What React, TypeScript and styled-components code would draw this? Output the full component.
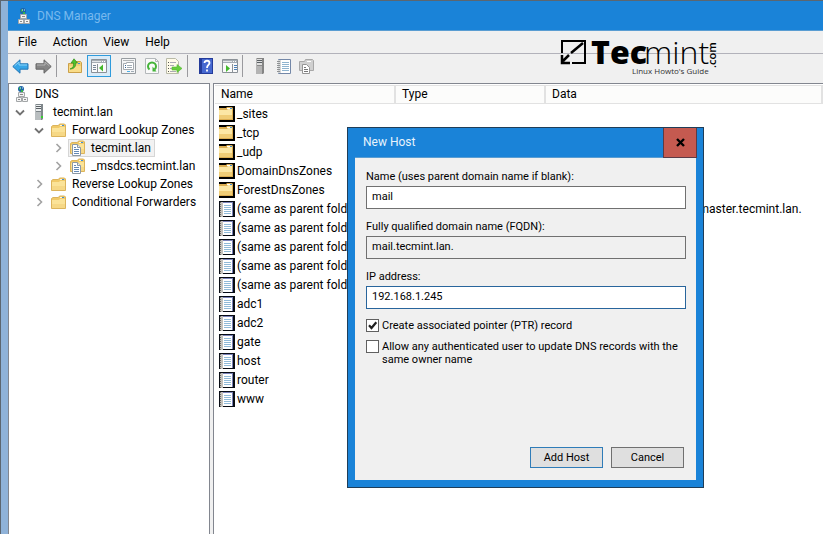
import React from "react";
import styled, { createGlobalStyle } from "styled-components";

const uiFont = `Roboto, "Open Sans", sans-serif`;

const GlobalStyle = createGlobalStyle`
  * { box-sizing: border-box; }
  body { margin: 0; background: #8fb2d8; font-family: ${uiFont}; font-size: 12px; color: #000; }
  button, input { font: inherit; color: inherit; }
  svg { display: block; flex: none; }
`;

/* ---------- window frame ---------- */

const Window = styled.div`
  position: relative;
  display: flex;
  flex-direction: column;
  min-height: 100vh;
  padding-left: 7px;
  border-top: 1px solid #5c6670;
  border-left: 1px solid #5c6670;
  background: #8fb2d8;
`;

const TitleBar = styled.header`
  display: flex;
  align-items: center;
  gap: 6px;
  height: 30px;
  padding-left: 10px;
  background: #1a83d8;
  border-bottom: 1px solid #5a9dd2;
`;

const AppTitle = styled.h1`
  margin: 0;
  font-size: 12px;
  font-weight: 400;
  color: #78b9ee;
`;

const MenuBar = styled.nav`
  display: flex;
  height: 23px;
  padding-left: 2px;
  background: #f0f0f0;
  border-bottom: 1px solid #b2b2ba;
`;

const MenuButton = styled.button`
  padding: 0 8px;
  border: 0;
  background: none;
  line-height: 20px;
`;

const Toolbar = styled.div`
  display: flex;
  align-items: center;
  height: 29px;
  padding: 0 1px 5px;
  background: #f0f0f0;
`;

const ToolGroup = styled.div<{ $gap?: boolean }>`
  display: flex;
  margin-left: ${(p) => (p.$gap ? "6px" : "0")};
`;

const ToolButton = styled.button<{ $wide?: boolean; $active?: boolean }>`
  display: flex;
  align-items: center;
  justify-content: center;
  width: ${(p) => (p.$wide ? "24px" : "23px")};
  height: 22px;
  padding: 0;
  border: 1px solid ${(p) => (p.$active ? "#2f9bdc" : "transparent")};
  background: ${(p) => (p.$active ? "#d9ebf8" : "none")};
`;

const Divider = styled.span`
  width: 1px;
  height: 22px;
  margin: 0 6px 0 1px;
  background: #9a9a9e;
`;

const Logo = styled.div`
  position: absolute;
  top: 24px;
  left: 557px;
`;

/* ---------- panes ---------- */

const Panes = styled.main`
  display: grid;
  grid-template-columns: 202px minmax(0, 1fr);
  gap: 3px;
  flex: 1;
  background: #f0f0f0;
`;

const Pane = styled.section`
  border: 1px solid #82868f;
  border-bottom: 0;
  background: #fff;
  overflow: hidden;
`;

const ListPane = styled(Pane)`
  border-right: 0;
  padding: 1px 0 0 1px;
`;

const Tree = styled.ul`
  margin: 0;
  padding: 1px 0 0;
  list-style: none;
`;

const TreeItem = styled.li<{ $depth: number }>`
  display: flex;
  align-items: center;
  height: 18px;
  padding-left: ${(p) => [5, 4, 23, 42][p.$depth]}px;
`;

const Chevron = styled.span`
  display: flex;
  justify-content: center;
  width: 14px;
  margin-right: 3px;
`;

const TreeLabel = styled.span<{ $selected?: boolean }>`
  display: flex;
  align-items: center;
  gap: 6px;
  height: 18px;
  padding: 0 3px 0 1px;
  border: 1px solid ${(p) => (p.$selected ? "#d6d6d6" : "transparent")};
  background: ${(p) => (p.$selected ? "#f2f2f2" : "none")};
  line-height: 16px;
  white-space: nowrap;
`;

const RecordTable = styled.table`
  width: 100%;
  border-collapse: separate;
  border-spacing: 0;
  table-layout: fixed;
`;

const HeadCell = styled.th<{ $width?: number }>`
  width: ${(p) => (p.$width ? `${p.$width}px` : "auto")};
  height: 19px;
  padding: 0 6px;
  border: solid #e2e2e2;
  border-width: 1px 2px 1px 0;
  background: #fcfcfb;
  font-weight: 400;
  line-height: 17px;
  text-align: left;
`;

const Cell = styled.td`
  height: 19px;
  padding: 0 6px;
  line-height: 18px;
  white-space: nowrap;
`;

const NameCell = styled(Cell)`
  padding: 0 0 0 4px;
`;

const NameContent = styled.span`
  display: flex;
  align-items: center;
  gap: 2px;
`;

/* ---------- dialog ---------- */

const Dialog = styled.form`
  position: absolute;
  top: 126px;
  left: 346px;
  width: 357px;
  border: 1px solid #1f3d58;
  background: #1a83d8;
  padding: 0 7px 7px;
  font-size: 11px;
`;

const DialogBar = styled.div`
  display: flex;
  justify-content: space-between;
  height: 29px;
  padding-left: 8px;
`;

const DialogTitle = styled.h2`
  margin: 0;
  font-size: 12px;
  font-weight: 400;
  line-height: 29px;
  color: #e8f3fc;
`;

const CloseButton = styled.button`
  display: flex;
  align-items: center;
  justify-content: center;
  width: 34px;
  height: 30px;
  margin-right: -1px;
  border: 1px solid #5b3b46;
  border-top: 0;
  background: #c55a50;
  z-index: 1;
`;

const DialogBody = styled.div`
  display: flex;
  flex-direction: column;
  min-height: 323px;
  padding: 11px 10px 12px 11px;
  border-top: 1px solid #5a9dd2;
  background: #f0f0f0;
`;

const Field = styled.div`
  display: flex;
  flex-direction: column;
  margin-bottom: 10px;
`;

const FieldLabel = styled.label`
  height: 17px;
  line-height: 15px;
`;

const TextBox = styled.input`
  width: 100%;
  height: 23px;
  padding: 0 5px 3px;
  border: 1px solid #707070;
  border-radius: 0;
  outline: 0;
  background: #fff;
  &:read-only { background: #f0f0f0; }
`;

const AddressBox = styled(TextBox)`
  border-color: #28659c;
`;

const CheckLabel = styled.label`
  display: flex;
  gap: 3px;
  margin-bottom: 8px;
  line-height: 13px;
`;

const CheckBox = styled.input`
  appearance: none;
  flex: none;
  width: 13px;
  height: 13px;
  margin: 0;
  border: 1px solid #606060;
  background: #fff;
  &:checked {
    background: #fff url("data:image/svg+xml,%3Csvg xmlns='http://www.w3.org/2000/svg' viewBox='0 0 11 11'%3E%3Cpath d='M2 5.2 4.5 8 9.3 2.2' fill='none' stroke='%23202020' stroke-width='2.2'/%3E%3C/svg%3E");
  }
`;

const Actions = styled.div`
  display: flex;
  justify-content: flex-end;
  gap: 8px;
  margin-top: auto;
  padding-right: 2px;
`;

const PushButton = styled.button<{ $primary?: boolean }>`
  width: 73px;
  height: 21px;
  padding: 0;
  border: 1px solid ${(p) => (p.$primary ? "#2f7cb8" : "#707070")};
  background: #dfdfdf;
`;

/* ---------- icons ---------- */

const DnsIcon = () => (
  <svg width="13" height="16" viewBox="0 0 13 16">
    <circle cx="5" cy="3" r="3" fill="#1d63a8" />
    <path d="M3 1.5h2v2H3zM5 4h2v2H5z" fill="#35b34a" />
    <path d="M4 2h1M6 2h1" stroke="#c8ecf8" />
    <path d="M2.5 6.5h6v4h-6z" fill="#f2f2f2" stroke="#a3a6a8" />
    <path d="M4 8.5h3" stroke="#8a8a8a" />
    <path d="M.5 11.5h5v4h-5zM6.5 11.5h5v4h-5z" fill="#f4f4f4" stroke="#a3a6a8" />
    <path d="M2 13.5h2M8 13.5h2" stroke="#8a8a8a" />
  </svg>
);

const ServerIcon = ({ gray }: { gray?: boolean }) => (
  <svg width="15" height="16" viewBox="0 0 15 16">
    <path d="M3 1 4 0h7v15l-1 1H3z" fill={gray ? "#858585" : "#7f878b"} />
    <path d="M3 1h6v15H3z" fill={gray ? "#b4b4b4" : "#b9bec0"} />
    <path d="M4 1h5v7H4z" fill={gray ? "#dedede" : "#eceff0"} />
    <path d="M4 2.5h5M4 4.5h5" stroke="#5a6064" />
    <path d="M4 7.5h5" stroke={gray ? "#8a8a8a" : "#7c8488"} />
    {!gray && <path d="M9 12h2v2H9z" fill="#36d02e" />}
  </svg>
);

const folderShape = (
  <>
    <path d="M.5 3.5 2 2.5h5.5L8.5 1h5l1 1v11.5H.5z" fill="#f1ca68" stroke="#dcb45c" />
    <path d="M1 5h7l1-1h5v9H1z" fill="#fbe398" />
    <path d="M1 9h13v4H1z" fill="#f3d079" opacity=".6" />
    <path d="M9 2.5h2" stroke="#fff8dc" />
    <path d="M11 2.5h2" stroke="#3c8ddb" />
  </>
);

const FolderIcon = () => (
  <svg width="15" height="14" viewBox="0 0 15 14">{folderShape}</svg>
);

const ZoneIcon = () => (
  <svg width="15" height="16" viewBox="0 0 15 16">
    {folderShape}
    <path d="M2.5 4.5h5l3 3v8h-8z" fill="#fff" stroke="#8c98a4" />
    <path d="M7.5 4.5v3h3" fill="#e7edf2" stroke="#8c98a4" />
    <path d="M4 7.5h2M4 9.5h5M4 11.5h5M4 13.5h5" stroke="#6489b5" />
  </svg>
);

const ListFolderIcon = () => (
  <svg width="16" height="16" viewBox="0 0 16 16">
    <path d="M0 0h16v16H0z" fill="#000" />
    <path d="M0 2h7l1-1h5l1 1v12H0z" fill="#dcae52" />
    <path d="M0 4h8l1-1h4v10H0z" fill="#fce7a5" />
    <path d="M0 9h13v4H0z" fill="#f0cd77" />
    <path d="M8 2.5h3" stroke="#fff" />
    <path d="M11 2.5h2" stroke="#3c8ddb" />
  </svg>
);

const RecordIcon = () => (
  <svg width="16" height="16" viewBox="0 0 16 16">
    <path d="M0 0h16v16H0z" fill="#080c14" />
    <path d="M2 1h12v14H2z" fill="#7a82b8" />
    <path d="M2 2h11v13H2z" fill="#fff" />
    <path d="M1 1h3v15H1z" fill="#c4c2bd" />
    <path d="M1.5 1v15" stroke="#6b6862" strokeDasharray="1 1" />
    <path d="M5 4.5h7M5 6.5h7M5 8.5h7M5 10.5h7M5 12.5h7" stroke="#90bad8" />
  </svg>
);

const ChevronDown = () => (
  <svg width="10" height="7" viewBox="0 0 10 7">
    <path d="m1 1.5 4 4 4-4" fill="none" stroke="#727272" strokeWidth="1.8" />
  </svg>
);

const ChevronRight = () => (
  <svg width="7" height="10" viewBox="0 0 7 10">
    <path d="m1.5 1 4 4-4 4" fill="none" stroke="#a2a2a2" strokeWidth="1.6" />
  </svg>
);

const ArrowIcon = ({ back }: { back?: boolean }) => (
  <svg width="17" height="15" viewBox="0 0 17 15">
    <path
      d={back ? "M.8 7.5 8 .8v4h8v5.4H8v4z" : "M16.2 7.5 9 .8v4H1v5.4h8v4z"}
      fill={back ? "#35a5e7" : "#858585"}
      stroke={back ? "#2275b5" : "#666"}
    />
    <path d={back ? "M2.5 7 7 3v3h8" : "M14.5 7 10 3v3H2"} fill="none" stroke={back ? "#8bd4fa" : "#b5b5b5"} />
  </svg>
);

const FolderUpIcon = () => (
  <svg width="16" height="16" viewBox="0 0 16 16">
    <path d="M1.5 5.5h5l2-2h5l1 1v10h-13z" fill="#f2cf73" stroke="#cba049" />
    <path d="M2 8h12v6H2z" fill="#f9dc88" />
    <path d="M11 5.5h2" stroke="#3c8ddb" />
    <path d="M3 11c3-1 4-3 3.500-6H4L7 .8 10.500 5H8.600c.5 4-2 6-5.600 6z" fill="#53c22c" stroke="#32911c" strokeWidth=".7" />
  </svg>
);

const PanelIcon = ({ run }: { run?: boolean }) => (
  <svg width="16" height="14" viewBox="0 0 16 14">
    <path d="M.5.5h15v13H.5z" fill="#fafafa" stroke="#8b9197" />
    <path d="M1 1h14v3H1z" fill="#a6adb4" />
    <path d="M1 2.5h9" stroke="#e3e6e8" />
    <path d="M11 2.5h1M13 2.5h1" stroke="#fff" />
    <path d={run ? "M10.5 5v8" : "M6.5 5v8"} stroke="#8b9197" />
    {run ? (
      <>
        <path d="m4 6 4 3.500-4 3.500z" fill="#43b82c" />
        <path d="M12 6.5h3M12 8.5h3M12 10.5h3" stroke="#4b80b8" />
      </>
    ) : (
      <>
        <path d="M2 6.5h3M2 8.5h3M2 10.5h3" stroke="#788797" />
        <path d="m12 5.500-4 3.500 4 3.500z" fill="#43b82c" />
      </>
    )}
  </svg>
);

const PropertiesIcon = () => (
  <svg width="15" height="16" viewBox="0 0 15 16">
    <path d="M.5.5h14v15H.5z" fill="#f4f5f6" stroke="#979ca0" />
    <path d="M2 2.500h11" stroke="#b1b5b8" />
    <path d="M2.500 5.500h3v-1h7v7h-10z" fill="#fff" stroke="#a6abb0" />
    <path d="M4 7.500h1M4 9.500h1" stroke="#36669a" />
    <path d="M6 7.500h5M6 9.500h5M10 13.500h3" stroke="#a0abb4" />
    <path d="M6 13.500h3" stroke="#4ab0e8" />
  </svg>
);

const RefreshIcon = () => (
  <svg width="14" height="16" viewBox="0 0 14 16">
    <path d="M.5.5h10l3 3v12H.5z" fill="#fafafa" stroke="#b4b8ba" />
    <path d="M10.5.5v3h3" fill="none" stroke="#b4b8ba" />
    <path d="M4.500 11.500A4 4 0 1 1 9.500 11.500" fill="none" stroke="#45b439" strokeWidth="2" />
    <path d="M7.500 8.500v5h4z" fill="#45b439" />
  </svg>
);

const ExportIcon = () => (
  <svg width="17" height="16" viewBox="0 0 17 16">
    <path d="M.5.5h9l3 3v12H.5z" fill="#fffbe9" stroke="#b9baa8" />
    <path d="M2 4.5h1M2 7.5h1M2 10.5h1M2 13.5h1" stroke="#555" />
    <path d="M4 4.5h6M4 7.5h4M4 10.5h4M4 13.5h6" stroke="#acaab4" />
    <path d="M6 9h5V6.500l5 3.900-5 4.100V12H6z" fill="#67ce3b" stroke="#52b532" strokeWidth=".6" />
  </svg>
);

const HelpIcon = () => (
  <svg width="14" height="16" viewBox="0 0 14 16">
    <path d="M0 0h14v16H0z" fill="#243b9a" />
    <path d="M3 1h10v14H3z" fill="#4668d0" />
    <path d="M5.500 5c0-3 5-3 5 0 0 2-2.500 2-2.500 5M8 11.500v2" fill="none" stroke="#fff" strokeWidth="1.800" />
  </svg>
);

const NotebookIcon = () => (
  <svg width="15" height="15" viewBox="0 0 15 15">
    <path d="M2.5.5h12v14h-12z" fill="#fff" stroke="#7488a8" />
    <path d="M2 1h3v13H2z" fill="#d3d5d6" />
    <path d="M1 2.5h3M1 4.5h3M1 6.5h3M1 8.5h3M1 10.5h3M1 12.5h3" stroke="#8f9294" />
    <path d="M6 3.5h7M6 5.5h7M6 7.5h7M6 9.5h7M6 11.5h7" stroke="#8fb4cf" />
  </svg>
);

const GrayZoneIcon = () => (
  <svg width="15" height="15" viewBox="0 0 15 15">
    <path d="M.5 2.5h5l1-2h7l1 1v10H.5z" fill="#d0d0d0" stroke="#a8a8a8" />
    <path d="M8 2.5h4" stroke="#fff" />
    <path d="M3.5 5.5h4l3 3v6h-7z" fill="#fff" stroke="#959595" />
    <path d="M5 8.5h2M5 10.5h4M5 12.5h4" stroke="#777" />
  </svg>
);

const LogoArt = () => (
  <svg width="164" height="56" viewBox="0 -8 164 56" role="img" aria-label="Tecmint.com Linux Howto's Guide">
    <path d="M4 20V8h23v22H14" fill="none" stroke="#000" strokeWidth="2" />
    <path d="M25 10 13 20M11 22l-6 6M4 22v8h8" fill="none" stroke="#000" strokeWidth="2.5" />
    <g fontFamily="Open Sans, Noto Sans, sans-serif">
      <text x="33" y="31" fontSize="32" fontWeight="800">Tec</text>
      <text x="86" y="31" fontSize="32" fontWeight="300">mint</text>
      <text transform="translate(158 35) rotate(-90)" fontSize="11" fontWeight="600">.com</text>
      <text x="74" y="41" fontSize="8" fill="#333">Linux Howto's Guide</text>
    </g>
  </svg>
);

/* ---------- data ---------- */

type TreeNode = { label: string; depth: number; icon: React.ReactNode; open?: boolean; selected?: boolean };

const tree: TreeNode[] = [
  { label: "DNS", depth: 0, icon: <DnsIcon /> },
  { label: "tecmint.lan", depth: 1, icon: <ServerIcon />, open: true },
  { label: "Forward Lookup Zones", depth: 2, icon: <FolderIcon />, open: true },
  { label: "tecmint.lan", depth: 3, icon: <ZoneIcon />, open: false, selected: true },
  { label: "_msdcs.tecmint.lan", depth: 3, icon: <ZoneIcon />, open: false },
  { label: "Reverse Lookup Zones", depth: 2, icon: <FolderIcon />, open: false },
  { label: "Conditional Forwarders", depth: 2, icon: <FolderIcon />, open: false },
];

const folders = ["_sites", "_tcp", "_udp", "DomainDnsZones", "ForestDnsZones"];
const same = "(same as parent folder)";
const records = [same, same, same, same, same, "adc1", "adc2", "gate", "host", "router", "www"];
const soaData = "[20], adc1.tecmint.lan., hostmaster.tecmint.lan.";

export default function App() {
  return (
    <>
      <GlobalStyle />
      <Window>
        <TitleBar>
          <DnsIcon />
          <AppTitle>DNS Manager</AppTitle>
        </TitleBar>
        <MenuBar>
          {["File", "Action", "View", "Help"].map((item) => (
            <MenuButton key={item} type="button">{item}</MenuButton>
          ))}
        </MenuBar>
        <Toolbar>
          <ToolGroup>
            <ToolButton aria-label="Back"><ArrowIcon back /></ToolButton>
            <ToolButton aria-label="Forward"><ArrowIcon /></ToolButton>
          </ToolGroup>
          <Divider />
          <ToolGroup>
            <ToolButton $wide aria-label="Up one level"><FolderUpIcon /></ToolButton>
            <ToolButton $wide $active aria-label="Show console tree"><PanelIcon /></ToolButton>
          </ToolGroup>
          <ToolGroup $gap>
            <ToolButton aria-label="Properties"><PropertiesIcon /></ToolButton>
            <ToolButton aria-label="Refresh"><RefreshIcon /></ToolButton>
            <ToolButton aria-label="Export list"><ExportIcon /></ToolButton>
          </ToolGroup>
          <Divider />
          <ToolGroup>
            <ToolButton $wide aria-label="Help"><HelpIcon /></ToolButton>
            <ToolButton aria-label="Show action pane"><PanelIcon run /></ToolButton>
          </ToolGroup>
          <Divider />
          <ToolGroup>
            <ToolButton aria-label="New server"><ServerIcon gray /></ToolButton>
            <ToolButton aria-label="New record"><NotebookIcon /></ToolButton>
            <ToolButton aria-label="New zone"><GrayZoneIcon /></ToolButton>
          </ToolGroup>
        </Toolbar>
        <Logo><LogoArt /></Logo>

        <Panes>
          <Pane>
            <Tree>
              {tree.map((node) => (
                <TreeItem key={node.label + node.depth} $depth={node.depth}>
                  {node.open !== undefined && (
                    <Chevron>{node.open ? <ChevronDown /> : <ChevronRight />}</Chevron>
                  )}
                  <TreeLabel $selected={node.selected}>
                    {node.icon}
                    {node.label}
                  </TreeLabel>
                </TreeItem>
              ))}
            </Tree>
          </Pane>
          <ListPane>
            <RecordTable>
              <thead>
                <tr>
                  <HeadCell $width={181}>Name</HeadCell>
                  <HeadCell $width={150}>Type</HeadCell>
                  <HeadCell>Data</HeadCell>
                </tr>
              </thead>
              <tbody>
                {folders.map((name) => (
                  <tr key={name}>
                    <NameCell><NameContent><ListFolderIcon />{name}</NameContent></NameCell>
                    <Cell />
                    <Cell />
                  </tr>
                ))}
                {records.map((name, i) => (
                  <tr key={i}>
                    <NameCell><NameContent><RecordIcon />{name}</NameContent></NameCell>
                    <Cell />
                    <Cell>{i === 0 ? soaData : null}</Cell>
                  </tr>
                ))}
              </tbody>
            </RecordTable>
          </ListPane>
        </Panes>

        <Dialog role="dialog" aria-labelledby="dialog-title" onSubmit={(e) => e.preventDefault()}>
          <DialogBar>
            <DialogTitle id="dialog-title">New Host</DialogTitle>
            <CloseButton type="button" aria-label="Close">
              <svg width="9" height="9" viewBox="0 0 9 9">
                <path d="m1 1 7 7M8 1 1 8" stroke="#000" strokeWidth="2.4" />
              </svg>
            </CloseButton>
          </DialogBar>
          <DialogBody>
            <Field>
              <FieldLabel htmlFor="host-name">Name (uses parent domain name if blank):</FieldLabel>
              <TextBox id="host-name" defaultValue="mail" />
            </Field>
            <Field>
              <FieldLabel htmlFor="fqdn">Fully qualified domain name (FQDN):</FieldLabel>
              <TextBox id="fqdn" readOnly value="mail.tecmint.lan." />
            </Field>
            <Field>
              <FieldLabel htmlFor="ip">IP address:</FieldLabel>
              <AddressBox id="ip" defaultValue="192.168.1.245" />
            </Field>
            <CheckLabel>
              <CheckBox type="checkbox" defaultChecked />
              Create associated pointer (PTR) record
            </CheckLabel>
            <CheckLabel>
              <CheckBox type="checkbox" />
              Allow any authenticated user to update DNS records with the same owner name
            </CheckLabel>
            <Actions>
              <PushButton type="submit" $primary>Add Host</PushButton>
              <PushButton type="button">Cancel</PushButton>
            </Actions>
          </DialogBody>
        </Dialog>
      </Window>
    </>
  );
}
